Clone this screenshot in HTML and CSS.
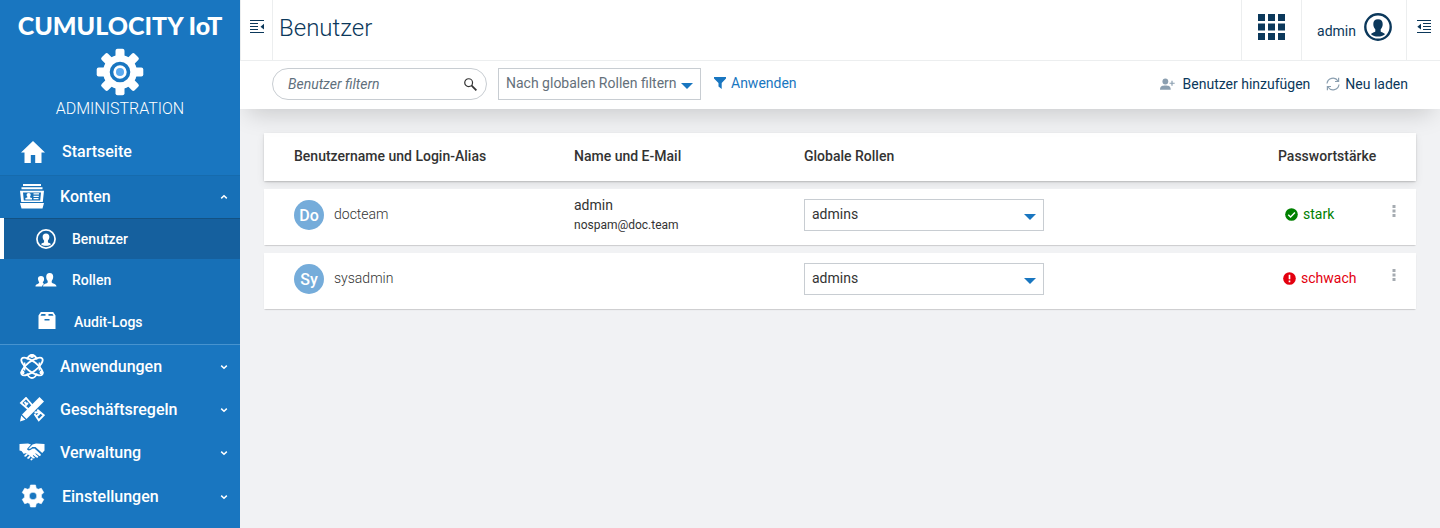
FILE: index.html
```html
<!DOCTYPE html>
<html lang="de">
<head>
<meta charset="utf-8">
<meta name="viewport" content="width=device-width, initial-scale=1">
<title>Benutzer – Administration</title>
<link rel="stylesheet" href="styles.css">
</head>
<body>
<svg class="sprite" aria-hidden="true">
  <symbol id="chevron" viewBox="0 0 8 8"><path d="M1.200 2.600 4 5.200l2.800-2.600" fill="none" stroke="currentColor" stroke-width="1.500"/></symbol>
  <symbol id="person" viewBox="0 0 28 28">
    <circle cx="14" cy="14" r="12.700" fill="none" stroke="currentColor" stroke-width="2.400"/>
    <path d="M14 6.200c3.200 0 4.700 1.900 4.700 4.800 0 2.400-.8 4-2 5.200v2.300c.3 1 3.600 1.100 4.300 2.700-1.700 1.500-4.200 2.300-7 2.300s-5.300-.8-7-2.300c.7-1.600 4-1.700 4.300-2.700v-2.300c-1.200-1.200-2-2.800-2-5.200 0-2.900 1.500-4.800 4.700-4.800z" fill="currentColor"/>
  </symbol>
  <symbol id="kebab" viewBox="0 0 4 12"><path d="M.5 0h3v3h-3zM.5 4.500h3v3h-3zM.5 9h3v3h-3z" fill="currentColor"/></symbol>
</svg>
<div class="app">
  <aside class="sidebar">
    <div class="brand">
      <div class="brand-name">CUMULOCITY IoT</div>
      <svg class="brand-gear" viewBox="0 0 48 48" aria-hidden="true">
        <g fill="#fff">
          <circle cx="24" cy="24" r="17"/>
          <g><rect x="19.500" y=".7" width="9" height="46.600" rx="2"/><rect x=".7" y="19.500" width="46.600" height="9" rx="2"/></g>
          <g transform="rotate(45 24 24)"><rect x="19.500" y=".7" width="9" height="46.600" rx="2"/><rect x=".7" y="19.500" width="46.600" height="9" rx="2"/></g>
        </g>
        <circle cx="24" cy="24" r="8.500" fill="#fff" stroke="#1976c0" stroke-width="3.600"/>
        <circle cx="24" cy="24" r="4" fill="#5aaaf0"/>
      </svg>
      <div class="brand-app">ADMINISTRATION</div>
    </div>
    <nav>
      <a class="nav-item shifted home" href="#"><svg class="nav-icon" viewBox="0 0 26 26"><path d="M13 2 1 13.500h3.500V24h6.300v-8h4.400v8h6.300V13.500H25z" fill="currentColor"/></svg>Startseite</a>
      <div class="nav-group">
        <a class="nav-item group-head" href="#"><svg class="nav-icon" viewBox="0 0 26 26"><path d="M4 0h18v2H4zM2.500 3.300h21v2h-21zM1 6.800h24L23.800 18H2.200zm3 1.700.8 8h16.400l.8-8zM1 19h24l-1.500 5.500h-21z" fill="currentColor" fill-rule="evenodd"/><path d="M9.700 9c1.500 0 2 .8 2 1.900 0 .8-.3 1.300-.6 1.700v.8l1.900.6v1.500H6.400V14l1.900-.6v-.8c-.4-.4-.7-.9-.7-1.700C7.600 9.800 8.200 9 9.700 9zM14.500 9.300H20v1.200h-5.500zM14.500 11.700h5.300v1.200h-5.300zM14.500 14.100h5v1.200h-5z" fill="currentColor"/></svg>Konten<svg class="chevron up"><use href="#chevron"/></svg></a>
        <a class="sub-item active" href="#" aria-current="page"><svg class="sub-icon user-icon"><use href="#person"/></svg>Benutzer</a>
        <a class="sub-item" href="#"><svg class="sub-icon" viewBox="0 0 22 22"><path d="M14.700 4c2.400 0 3.500 1.500 3.500 3.800 0 1.900-.8 3.200-1.500 4.100v1.500c.5 1.100 4.600 1 4.800 4.100H8c.2-3.100 4.200-3 4.700-4.100v-1.500c-.8-.9-1.500-2.200-1.500-4.100C11.200 5.500 12.300 4 14.700 4z" fill="currentColor"/><path d="M6 7c2 0 3.100 1 3.100 3 0 1.600-.6 2.400-1.200 3.100v1c.2.300 1 .6 1.500.9-1.500.5-2.100 1.300-2.300 2.500H.5c0-2.400 2.900-2.400 3.600-3.400.2-.7-.1-.9-.5-1.800L2.900 10C2.900 8 4 7 6 7z" fill="currentColor"/></svg>Rollen</a>
        <a class="sub-item last" href="#"><svg class="sub-icon" viewBox="0 0 22 22"><path d="M4.800 1h12.400l2.300 3.500V18h-17V4.500zM5.500 3l-1 1.700h5V3zm7 0v1.700h5l-1-1.700zM8.500 8v1.600h5V8z" fill="currentColor" fill-rule="evenodd"/></svg>Audit-Logs</a>
      </div>
      <a class="nav-item" href="#"><svg class="nav-icon" viewBox="0 0 26 26"><g fill="none" stroke="currentColor" stroke-width="1.800"><ellipse cx="13" cy="12.500" rx="13" ry="5" transform="rotate(38 13 12.500)"/><ellipse cx="13" cy="12.500" rx="13" ry="5" transform="rotate(-38 13 12.500)"/><path d="M8 5.500C9.300 2.500 11 1 13 1s3.700 1.500 5 4.500M8 19.500c1.300 3 3 4.500 5 4.500s3.700-1.500 5-4.500M5.500 8.500v8M20.500 8.500v8"/></g><circle cx="13" cy="2" r="2" fill="currentColor"/><circle cx="3.500" cy="18.500" r="2" fill="currentColor"/><circle cx="22.500" cy="18.500" r="2" fill="currentColor"/></svg>Anwendungen<svg class="chevron"><use href="#chevron"/></svg></a>
      <a class="nav-item" href="#"><svg class="nav-icon" viewBox="0 0 26 26"><g fill="none" stroke="currentColor" stroke-width="1.900"><path d="M9.500 12.500 2 6 7 1l6.500 7.500M15.500 17l4.300 6.200 5-5-6.500-5.500M6.500 8.500 9 6M5.500 5l2 2M15.500 15.500l5-.5M18 19l3-3"/></g><path d="M20.500 0 25 4.500 7.500 22 3 17.500zM2.200 18.500l4.300 4.300L1 24.500z" fill="currentColor"/></svg>Geschäftsregeln<svg class="chevron"><use href="#chevron"/></svg></a>
      <a class="nav-item" href="#"><svg class="nav-icon" viewBox="0 0 26 26"><path d="M.5 4 9 3.500l3 1-4 4.500c.5 2 3.300 1.800 5-.3l2.500-.2 6 5.500c1 1.300-.2 2.400-1.500 1.700l-3.300-2.500-.4.600 3 2.600c-.2 1.500-1.400 1.500-2.300.9l-2.700-2.200-.5.600 2.200 2c-.6 1-1.500 1-2.500.3l-5.400-4.200c-.9-1-2.600-.5-3.300.2L2.500 11 .5 10.500z" fill="currentColor"/><path d="m13.500 4.500 3.500-1 8.500.5v6.500L23.200 13l-6.800-6h-3.200c-1 1.500-2.500 2.200-3.700 1.600zM5.200 15.700l2-2c1-.8 2 .2 1.500 1l-1.300 1.500c-1 .8-2.600.4-2.200-.5zM8.300 17.500l1.700-1.600c1-.6 1.800.3 1.300 1.100l-1.100 1.500c-1 .8-2.400 0-1.900-1zM11.500 19.300l.9-1c1-.4 1.600.4 1.200 1.100l-.8.900c-.8.300-1.600-.3-1.300-1z" fill="currentColor"/></svg>Verwaltung<svg class="chevron"><use href="#chevron"/></svg></a>
      <a class="nav-item shifted" href="#"><svg class="nav-icon" viewBox="0 0 26 26"><path d="M10.500 1h5l.7 3.200 2 1.100 3.100-1 2.500 4.300-2.400 2.200v2.400l2.400 2.200-2.500 4.300-3.100-1-2 1.100-.7 3.200h-5l-.7-3.200-2-1.100-3.100 1-2.500-4.300 2.400-2.200v-2.400L2.200 8.600l2.500-4.300 3.100 1 2-1.100zM13 8.200a3.800 3.800 0 1 0 0 7.600 3.800 3.800 0 0 0 0-7.600z" fill="currentColor" fill-rule="evenodd" stroke="currentColor" stroke-width=".6"/></svg>Einstellungen<svg class="chevron"><use href="#chevron"/></svg></a>
    </nav>
  </aside>

  <div class="content">
    <header class="topbar">
      <button class="bar-cell toggle" aria-label="Navigation einklappen"><svg viewBox="0 0 14 14"><path d="M0 .5h14M0 3.500h8M0 6.500h8M0 9.500h8M0 12.500h14" stroke="currentColor"/><path d="M14 3.800v5.800L10.500 6.700z" fill="currentColor"/></svg></button>
      <h1>Benutzer</h1>
      <button class="bar-cell apps" aria-label="Anwendungsumschalter"><svg viewBox="0 0 28 28"><path d="M0 1h7v7H0zM10 1h7v7h-7zM20 1h7v7h-7zM0 10.500h7v7H0zM10 10.500h7v7h-7zM20 10.500h7v7h-7zM0 20h7v7H0zM10 20h7v7h-7zM20 20h7v7h-7z" fill="currentColor"/></svg></button>
      <button class="bar-cell user"><span>admin</span><svg><use href="#person"/></svg></button>
      <button class="bar-cell toggle right" aria-label="Seitenleiste öffnen"><svg viewBox="0 0 14 14"><path d="M0 .5h14M6 3.500h8M6 6.500h8M6 9.500h8M0 12.500h14" stroke="currentColor"/><path d="M4 3.800v5.800L.3 6.700z" fill="currentColor"/></svg></button>
    </header>
    <div class="toolbar">
      <div class="search">
        <input type="text" placeholder="Benutzer filtern" aria-label="Benutzer filtern">
        <svg viewBox="0 0 14 14" aria-hidden="true"><circle cx="5" cy="5" r="4.200" fill="none" stroke="currentColor" stroke-width="1.300"/><path d="m8 8 5.300 5.300" stroke="currentColor" stroke-width="1.900"/></svg>
      </div>
      <div class="select role-filter"><select aria-label="Nach globalen Rollen filtern"><option>Nach globalen Rollen filtern</option></select></div>
      <button class="link apply"><svg viewBox="0 0 12 12"><path d="M0 0h12v1.500L7.700 6v6L4.500 9.500V6L0 1.500z" fill="currentColor"/></svg>Anwenden</button>
      <button class="link action add"><svg viewBox="0 0 14 12"><circle cx="5" cy="3.200" r="2.700" fill="currentColor"/><path d="M0 11c0-3.600 2-4 5-4s5 .4 5 4z" fill="currentColor"/><path d="M11.200 2.500v4.600M8.900 4.800h4.800" stroke="currentColor" stroke-width="1.100"/></svg>Benutzer hinzufügen</button>
      <button class="link action reload"><svg viewBox="0 0 14 14"><g fill="none" stroke="currentColor" stroke-width="1.200"><path d="M1 6.500A6 6 0 0 1 12 4M13 7.500A6 6 0 0 1 2 10M12.600.7V4.500H9M1.400 13.300V9.500H5"/></g></svg>Neu laden</button>
    </div>

    <main>
      <table class="users">
        <colgroup><col class="c-login"><col class="c-name"><col><col class="c-pass"><col class="c-menu"></colgroup>
        <thead><tr><th>Benutzername und Login-Alias</th><th>Name und E-Mail</th><th>Globale Rollen</th><th>Passwortstärke</th><th></th></tr></thead>
        <tbody>
          <tr>
            <td><div class="login"><span class="avatar">Do</span><span class="login-name">docteam</span></div></td>
            <td><div class="name">admin</div><div class="mail">nospam@doc.team</div></td>
            <td><div class="select roles"><select aria-label="Globale Rollen für docteam"><option>admins</option></select></div></td>
            <td><div class="strength good"><svg viewBox="0 0 14 14"><circle cx="7" cy="7" r="6.800" fill="currentColor"/><path d="m3.500 7.200 2.500 2.500 4.700-4.900" fill="none" stroke="#fff" stroke-width="1.500"/></svg>stark</div></td>
            <td><button class="menu" aria-label="Aktionen für docteam"><svg><use href="#kebab"/></svg></button></td>
          </tr>
          <tr>
            <td><div class="login"><span class="avatar">Sy</span><span class="login-name">sysadmin</span></div></td>
            <td></td>
            <td><div class="select roles"><select aria-label="Globale Rollen für sysadmin"><option>admins</option></select></div></td>
            <td><div class="strength weak"><svg viewBox="0 0 14 14"><circle cx="7" cy="7" r="6.800" fill="currentColor"/><path d="M7 3v4.800M7 9.200V11" stroke="#fff" stroke-width="1.800"/></svg>schwach</div></td>
            <td><button class="menu" aria-label="Aktionen für sysadmin"><svg><use href="#kebab"/></svg></button></td>
          </tr>
        </tbody>
      </table>
    </main>
  </div>
</div>
</body>
</html>
```
FILE: styles.css
```css
* { box-sizing: border-box; }
body {
  margin: 0;
  font: 14px/20px Roboto, sans-serif;
  color: #333;
  background: #f1f2f4;
}
button, input, select { font: inherit; color: inherit; }
button { border: 0; padding: 0; background: none; cursor: pointer; }
a { color: inherit; text-decoration: none; }
svg { display: block; flex: none; }
.sprite { display: none; }
.app { display: flex; min-height: 100vh; }

/* Sidebar */
.sidebar { flex: none; width: 240px; background: #1976c0; color: #fff; }
.brand {
  display: flex;
  flex-direction: column;
  align-items: center;
  height: 130px;
  padding-top: 10px;
}
.brand-name { font: 900 25px/30px Lato, sans-serif; white-space: nowrap; }
.brand-gear { width: 48px; height: 48px; margin-top: 8px; }
.brand-app { margin-top: 3px; font-size: 16px; font-weight: 300; }
.nav-item {
  display: flex;
  align-items: center;
  gap: 15px;
  height: 43px;
  padding: 0 12px 0 19px;
  font-size: 16px;
  font-weight: 500;
}
.nav-item.shifted { height: 45px; padding-left: 20px; gap: 16px; }
.nav-item.home { padding-bottom: 2px; }
.nav-icon { width: 26px; height: 26px; }
.chevron { width: 8px; height: 8px; margin-left: auto; }
.chevron.up { transform: rotate(180deg); }
.nav-group {
  background: #1770b7;
  border-top: 1px solid #166bad;
  border-bottom: 1px solid #4793cf;
}
.group-head { height: 42px; }
.sub-item {
  display: flex;
  align-items: center;
  gap: 15px;
  height: 41px;
  padding-left: 35px;
  font-weight: 500;
}
.sub-item.last { height: 44px; gap: 16px; padding-left: 36px; }
.sub-item.active {
  padding-left: 31px;
  background: #15609e;
  border-left: 4px solid #fff;
  box-shadow: inset 0 1px #135283;
}
.sub-icon { width: 22px; height: 22px; }
.user-icon { padding: 1px; }

/* Top bar */
.content { flex: 1; min-width: 0; overflow: hidden; }
.topbar {
  position: relative;
  z-index: 1;
  display: flex;
  height: 61px;
  background: #fff;
  border-bottom: 1px solid #eceeef;
  color: #0b385b;
}
.topbar h1 {
  flex: 1;
  margin: 0;
  padding: 12px 6px;
  font-size: 24px;
  font-weight: 300;
  line-height: 32px;
}
.bar-cell {
  display: flex;
  align-items: flex-start;
  border-left: 1px solid #eceeef;
}
.toggle { padding: 20px 8px 0 9px; border-right: 1px solid #eceeef; }
.toggle svg { width: 14px; height: 14px; }
.toggle.right { padding: 20px 9px 0 10px; border-right: 0; }
.apps { padding: 13px 15px 0 16px; }
.apps svg { width: 28px; height: 28px; }
.user { gap: 8px; padding: 13px 14px 0 15px; }
.user span { padding-top: 8px; }
.user svg { width: 28px; height: 28px; }

/* Toolbar */
.toolbar {
  position: relative;
  display: flex;
  height: 48px;
  padding: 7px 32px 0;
  background: #fff;
  box-shadow: 0 12px 24px -8px rgba(0, 0, 0, .18);
}
.search {
  display: flex;
  align-items: center;
  width: 215px;
  height: 32px;
  padding: 0 9px 0 15px;
  border: 1px solid #c8cdd2;
  border-radius: 16px;
}
.search input { flex: 1; min-width: 0; padding: 0; border: 0; outline: 0; background: none; }
.search input::placeholder { font-style: italic; color: #5f707d; opacity: 1; }
.search svg { width: 13px; height: 13px; }
.select { position: relative; height: 32px; }
.select select {
  appearance: none;
  width: 100%;
  height: 100%;
  padding: 0 7px 2px;
  border: 1px solid #c8cdd2;
  border-radius: 0;
  background: #fff;
}
.select::after {
  content: "";
  position: absolute;
  right: 8px;
  top: 15px;
  border: 6px solid transparent;
  border-top-color: #1976c0;
  border-bottom: 0;
  pointer-events: none;
}
.role-filter { width: 203px; margin-left: 11px; color: #64707a; }
.link { display: flex; align-items: center; height: 32px; white-space: nowrap; }
.apply { gap: 5px; height: 30px; margin-left: 13px; color: #1976c0; }
.apply svg { width: 12px; height: 12px; }
.action { color: #0b385b; }
.action svg { color: #8b9fb0; }
.add { gap: 8px; margin-left: auto; }
.add svg { width: 15px; height: 13px; }
.reload { gap: 5px; margin-left: 16px; }
.reload svg { width: 14px; height: 14px; }

/* User list */
main { padding: 16px 24px; }
.users {
  width: 100%;
  table-layout: fixed;
  border-collapse: separate;
  border-spacing: 0 8px;
}
.c-login { width: 300px; }
.c-name { width: 230px; }
.c-pass { width: 114px; }
.c-menu { width: 34px; }
.users tr { border-radius: 2px; background: #fff; box-shadow: 0 1px 1px rgba(0, 0, 0, .16); }
.users thead tr { box-shadow: 0 1px 2px rgba(0, 0, 0, .2), 0 3px 8px rgba(0, 0, 0, .08); }
.users th { height: 48px; padding: 0 0 2px 10px; font-weight: 500; text-align: left; white-space: nowrap; }
.users td { height: 56px; padding: 0 0 0 10px; vertical-align: top; }
.users th:first-child, .users td:first-child { padding-left: 30px; }
.login { display: flex; gap: 10px; padding-top: 11px; font-weight: 300; }
.login-name { padding-top: 4px; }
.avatar {
  width: 30px;
  height: 30px;
  border-radius: 50%;
  background: #75acda;
  color: #fff;
  font-size: 16px;
  font-weight: 500;
  line-height: 32px;
  text-align: center;
}
.name { padding-top: 6px; }
.mail { font-size: 12px; }
.roles { width: 240px; margin-top: 10px; }
.strength { display: flex; align-items: center; gap: 5px; padding: 15px 0 0 7px; }
.strength.weak { padding-left: 5px; }
.strength svg { width: 13px; height: 13px; }
.good { color: #008000; }
.weak { color: #e3000f; }
.menu { display: block; margin-top: 16px; color: #a5abb1; }
.menu svg { width: 4px; height: 12px; }
```
